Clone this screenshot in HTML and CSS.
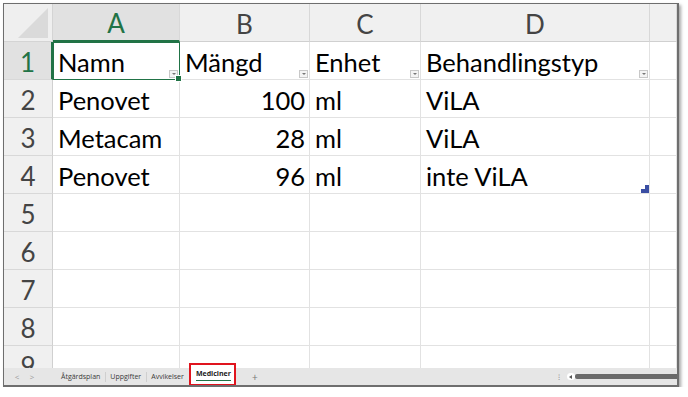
FILE: index.html
```html
<!DOCTYPE html>
<html>
<head>
<meta charset="utf-8">
<link rel="stylesheet" href="styles.css">
</head>
<body>
<div class="frame">
  <div class="sheet">
    <div class="corner"><div class="tri"></div></div>
    <div class="ch sel">A</div>
    <div class="ch">B</div>
    <div class="ch">C</div>
    <div class="ch">D</div>
    <div class="ch"></div>

    <div class="rh sel">1</div>
    <div class="c active">Namn<span class="flt"></span></div>
    <div class="c">Mängd<span class="flt"></span></div>
    <div class="c">Enhet<span class="flt"></span></div>
    <div class="c">Behandlingstyp<span class="flt"></span></div>
    <div class="c"></div>

    <div class="rh">2</div>
    <div class="c">Penovet</div>
    <div class="c num">100</div>
    <div class="c">ml</div>
    <div class="c">ViLA</div>
    <div class="c"></div>

    <div class="rh">3</div>
    <div class="c">Metacam</div>
    <div class="c num">28</div>
    <div class="c">ml</div>
    <div class="c">ViLA</div>
    <div class="c"></div>

    <div class="rh">4</div>
    <div class="c">Penovet</div>
    <div class="c num">96</div>
    <div class="c">ml</div>
    <div class="c">inte ViLA<span class="resize"></span></div>
    <div class="c"></div>

    <div class="rh">5</div><div class="c"></div><div class="c"></div><div class="c"></div><div class="c"></div><div class="c"></div>
    <div class="rh">6</div><div class="c"></div><div class="c"></div><div class="c"></div><div class="c"></div><div class="c"></div>
    <div class="rh">7</div><div class="c"></div><div class="c"></div><div class="c"></div><div class="c"></div><div class="c"></div>
    <div class="rh">8</div><div class="c"></div><div class="c"></div><div class="c"></div><div class="c"></div><div class="c"></div>
    <div class="rh">9</div><div class="c"></div><div class="c"></div><div class="c"></div><div class="c"></div><div class="c"></div>
  </div>
  <div class="tabbar">
    <span class="nav">&lt;</span>
    <span class="nav">&gt;</span>
    <span class="tab first">Åtgärdsplan</span>
    <span class="tab">Uppgifter</span>
    <span class="tab last">Avvikelser</span>
    <span class="tab current"><span class="tname">Mediciner</span></span>
    <span class="plus">+</span>
    <span class="spacer"></span>
    <span class="dots">⁝</span>
    <span class="scroll"><span class="knob"></span><span class="thumb"></span></span>
  </div>
</div>
</body>
</html>
```

FILE: styles.css
```css
* { box-sizing: border-box; }
html, body { margin: 0; padding: 0; background: #fff; }
body { font-family: Lato, "Open Sans", sans-serif; }

.frame {
  margin: 3px 0 0 3px;
  width: 676px;
  height: 384px;
  border: 1px solid #6e6e6e;
  border-width: 1px 2px 2px 1px;
  box-shadow: 2px 2px 3px rgba(0,0,0,0.35);
  display: flex;
  flex-direction: column;
  overflow: hidden;
  background: #fff;
}

.sheet {
  flex: 1;
  overflow: hidden;
  display: grid;
  grid-template-columns: 49px 127px 130px 111px 229px 1fr;
  grid-template-rows: 38px;
  grid-auto-rows: 38px;
}

.corner {
  background: #efefef;
  border-right: 1px solid #d4d4d4;
  border-bottom: 1px solid #d4d4d4;
  position: relative;
  overflow: hidden;
}
.tri {
  position: absolute;
  right: 4px;
  bottom: 3px;
  width: 0;
  height: 0;
  border-left: 30px solid transparent;
  border-bottom: 30px solid #dadada;
}

.ch {
  background: #f0f0f0;
  border-right: 1px solid #d8d8d8;
  border-bottom: 1px solid #d0d0d0;
  display: flex;
  align-items: center;
  justify-content: center;
  font-size: 26px;
  color: #444;
  padding-top: 2px;
}
.ch.sel {
  background: #e1e1e1;
  color: #217346;
  border-bottom: 2px solid #217346;
}

.rh {
  background: #f0f0f0;
  border-right: 1px solid #d0d0d0;
  border-bottom: 1px solid #d8d8d8;
  display: flex;
  align-items: center;
  justify-content: center;
  font-size: 26px;
  color: #444;
  padding-top: 2px;
}
.rh.sel {
  background: #e1e1e1;
  color: #217346;
  border-right: 2px solid #217346;
}

.c {
  border-right: 1px solid #e2e2e2;
  border-bottom: 1px solid #e2e2e2;
  display: flex;
  align-items: center;
  padding: 2px 4px 0 5px;
  font-size: 25.5px;
  color: #000;
  position: relative;
  white-space: nowrap;
}
.c.num { justify-content: flex-end; }
.c.active {
  border: 1px solid #217346;
  padding-left: 4px;
}
.c.active::after {
  content: "";
  position: absolute;
  right: -3px;
  bottom: -3px;
  width: 5px;
  height: 5px;
  background: #217346;
  border: 1px solid #fff;
  z-index: 2;
}

.flt {
  position: absolute;
  right: 1px;
  bottom: 1px;
  width: 9px;
  height: 8px;
  border: 1px solid #c8c8c8;
  background: #f4f4f4;
}
.flt::after {
  content: "";
  position: absolute;
  left: 2px;
  top: 2px;
  border-left: 2px solid transparent;
  border-right: 2px solid transparent;
  border-top: 2px solid #777;
}

.resize {
  position: absolute;
  right: 0;
  bottom: 0;
  width: 8px;
  height: 8px;
  background: #3a4ea3;
  clip-path: polygon(50% 0, 100% 0, 100% 100%, 0 100%, 0 50%, 50% 50%);
}

.tabbar {
  height: 17px;
  flex: none;
  background: #e6e6e6;
  display: flex;
  align-items: center;
  font-family: "Open Sans", Lato, sans-serif;
  font-size: 7px;
  color: #3a3a3a;
  position: relative;
}
.nav {
  display: inline-block;
  width: 6px;
  text-align: center;
  color: #9a9a9a;
  font-size: 8px;
  line-height: 10px;
  margin-left: 10px;
}
.nav + .nav { margin-left: 9px; }
.tab {
  margin-left: 4px;
  padding-right: 5px;
  border-right: 1px solid #cfcfcf;
  line-height: 10px;
}
.tab.first { margin-left: 26px; }
.tab.last { border-right: none; }
.tab.current {
  margin-left: 0;
  border: 2px solid #e0141e;
  background: #fff;
  height: 23px;
  width: 47px;
  padding: 0 0 0 5px;
  align-self: flex-start;
  margin-top: -5px;
  margin-bottom: -6px;
  display: flex;
  align-items: center;
  font-weight: 700;
  color: #222;
}
.tname {
  border-bottom: 1px solid #217346;
  line-height: 10px;
  padding-bottom: 1px;
}
.plus {
  margin-left: 16px;
  color: #777;
  font-size: 10px;
}
.spacer { flex: 1; }
.dots { color: #888; font-size: 8px; margin-right: 7px; }
.scroll {
  display: flex;
  align-items: center;
  width: 112px;
  margin-right: -2px;
}
.knob {
  width: 8px;
  height: 7px;
  background: #fff;
  border-radius: 4px;
  position: relative;
}
.knob::after {
  content: "";
  position: absolute;
  left: 2px;
  top: 1.5px;
  border-top: 2px solid transparent;
  border-bottom: 2px solid transparent;
  border-right: 3px solid #555;
}
.thumb {
  flex: 1;
  height: 5px;
  background: #6a6a6a;
  border-radius: 2px;
}
```
